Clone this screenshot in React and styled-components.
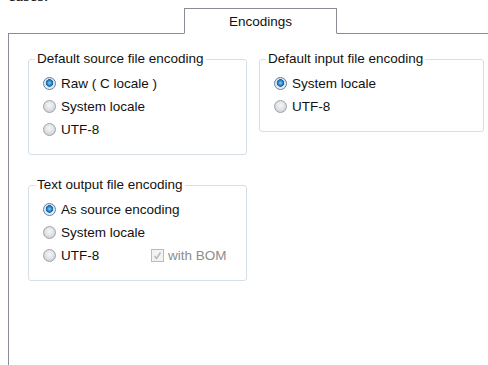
import styled, { createGlobalStyle } from 'styled-components'

const GlobalStyle = createGlobalStyle`
  html, body {
    margin: 0;
    padding: 0;
    background: #ffffff;
  }
  body {
    font-family: "Liberation Sans", Arial, sans-serif;
    font-size: 13.5px;
    color: #000;
  }
`

const Page = styled.div`
  width: 488px;
  height: 365px;
  overflow: hidden;
  background: #fff;
`

// tail of a line of text cut off by the screenshot's top edge
const CutLine = styled.div`
  height: 3px;
  overflow: hidden;
  padding-left: 8px;
  font-family: "Liberation Serif", "Times New Roman", serif;
  font-size: 17px;
  color: #111;
  & span {
    display: block;
    line-height: 17px;
    margin-top: -13px;
  }
`

const TabStrip = styled.div`
  display: flex;
  margin: 5px 0 0 8px;
  padding-left: 176px;
  border-bottom: 1px solid #898c95;
`

const Tab = styled.div`
  width: 151px;
  height: 24px;
  margin-bottom: -1px;
  border: 1px solid #898c95;
  border-bottom: 1px solid #fff;
  background: #fff;
  display: flex;
  justify-content: center;
  align-items: center;
  color: #111;
`

const Panel = styled.div`
  margin-left: 8px;
  border-left: 1px solid #898c95;
  height: 340px;
  padding: 18px 0 0 19px;
  box-sizing: border-box;
  display: grid;
  grid-template-columns: 219px 225px;
  align-content: start;
  align-items: start;
  column-gap: 12px;
  row-gap: 23px;
`

const Group = styled.fieldset`
  margin: 0;
  padding: 6px 0 13px 14px;
  border: 1px solid #d5dfe5;
  border-radius: 3px;
  min-width: 0;
`

const Legend = styled.legend`
  margin-left: -8px;
  padding: 0 2px;
  line-height: 14px;
  color: #111;
`

const Row = styled.div`
  display: flex;
  align-items: center;
  height: 23px;
`

const Option = styled.label`
  display: flex;
  align-items: center;
  gap: 5px;
  width: ${({ $width }) => ($width ? `${$width}px` : 'auto')};
  color: #111;
`

const RadioDot = styled.span`
  width: 13px;
  height: 13px;
  border-radius: 50%;
  box-sizing: border-box;
  border: 1px solid ${({ $checked }) => ($checked ? '#5a7fa6' : '#9ea4ab')};
  background: ${({ $checked }) =>
    $checked
      ? 'radial-gradient(circle at 50% 45%, #8fd6f6 0, #2a8fd3 2px, #1a5f9e 3.5px, #d9dde2 4px, #f4f5f7 6px)'
      : 'radial-gradient(circle at 50% 40%, #f6f6f6 0, #e1e3e6 4px, #d2d5d9 6px)'};
  flex: none;
`

const CheckBox = styled.span`
  width: 13px;
  height: 13px;
  box-sizing: border-box;
  border: 1px solid #b8bcc0;
  background: #f3f3f3;
  display: flex;
  align-items: center;
  justify-content: center;
  flex: none;
`

const Disabled = styled.span`
  display: flex;
  align-items: center;
  gap: 4px;
  color: #8d8d8d;
`

function Radio({ label, checked, width }) {
  return (
    <Option $width={width}>
      <RadioDot $checked={checked} />
      {label}
    </Option>
  )
}

function App() {
  return (
    <Page>
      <GlobalStyle />
      <CutLine>
        <span>cases:</span>
      </CutLine>
      <TabStrip>
        <Tab>Encodings</Tab>
      </TabStrip>
      <Panel>
        <Group>
          <Legend>Default source file encoding</Legend>
          <Row>
            <Radio label="Raw ( C locale )" checked />
          </Row>
          <Row>
            <Radio label="System locale" />
          </Row>
          <Row>
            <Radio label="UTF-8" />
          </Row>
        </Group>

        <Group>
          <Legend>Default input file encoding</Legend>
          <Row>
            <Radio label="System locale" checked />
          </Row>
          <Row>
            <Radio label="UTF-8" />
          </Row>
        </Group>

        <Group>
          <Legend>Text output file encoding</Legend>
          <Row>
            <Radio label="As source encoding" checked />
          </Row>
          <Row>
            <Radio label="System locale" />
          </Row>
          <Row>
            <Radio label="UTF-8" width={108} />
            <Disabled>
              <CheckBox>
                <svg width="9" height="9" viewBox="0 0 9 9">
                  <path d="M1.5 5 L3.5 7.5 L7.5 1.5" fill="none" stroke="#b4b8bc" strokeWidth="1.4" />
                </svg>
              </CheckBox>
              with BOM
            </Disabled>
          </Row>
        </Group>
      </Panel>
    </Page>
  )
}

export default App
